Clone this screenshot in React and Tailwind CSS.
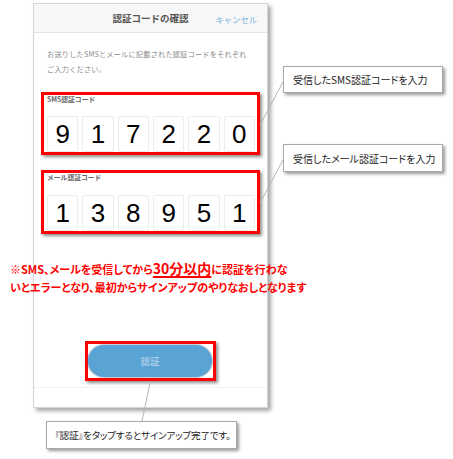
import React from "react";

const jp = "font-['Noto_Sans_CJK_JP','Noto_Sans',sans-serif]";

function DigitRow({ digits }) {
  return (
    <div className="flex gap-[4px] pl-[3px] pr-[2px]">
      {digits.map((d, i) => (
        <div
          key={i}
          className="flex-1 h-[36px] bg-white border border-[#ececec] rounded-[2px] flex items-center justify-center text-[26px] leading-none text-black font-['Liberation_Sans',sans-serif]"
        >
          {d}
        </div>
      ))}
    </div>
  );
}

function CodeBox({ label, digits, className }) {
  return (
    <div
      className={`border-[3px] border-[#ff0000] shadow-[2px_2px_3px_rgba(0,0,0,0.45)] ${className}`}
    >
      <div className="h-[8px] pl-[3px] text-[6.8px] leading-[8px] font-bold text-[#666]">{label}</div>
      {digits}
    </div>
  );
}

export default function App() {
  return (
    <div className={`relative w-[453px] h-[459px] bg-white overflow-hidden ${jp}`}>
      {/* phone screen */}
      <div className="ml-[33px] mt-[3px] w-[235px] h-[405px] border border-[#d6d6d6] bg-white shadow-[3px_3px_4px_rgba(0,0,0,0.35)] flex flex-col">
        <div className="relative h-[29px] shrink-0 bg-[#f7f7f7] border-b border-[#e4e4e4] flex items-center justify-center">
          <span className="text-[9.5px] font-bold text-[#555]">認証コードの確認</span>
          <span className="absolute right-[10px] top-[10px] text-[8.3px] leading-[10px] text-[#7ab5de]">キャンセル</span>
        </div>
        <div className="px-[7px] flex flex-col">
          <p className="mt-[14px] px-[6px] text-[7.2px] leading-[15px] text-[#8a8a8a] tracking-[0.2px]">
            お送りしたSMSとメールに記載された認証コードをそれぞれ
            <br />
            ご入力ください。
          </p>
          <CodeBox
            className="mt-[15px] h-[63px]"
            label="SMS認証コード"
            digits={
              <div className="mt-[13px]">
                <DigitRow digits={["9", "1", "7", "2", "2", "0"]} />
              </div>
            }
          />
          <CodeBox
            className="mt-[15px] h-[64px]"
            label="メール認証コード"
            digits={
              <div className="mt-[14px]">
                <DigitRow digits={["1", "3", "8", "9", "5", "1"]} />
              </div>
            }
          />
          <div className="mt-[107px] self-center w-[131px] h-[40px] border-[3px] border-[#ff0000] shadow-[2px_2px_3px_rgba(0,0,0,0.45)] p-[1px] pl-[0px]">
            <div className="h-full rounded-full bg-[#5aa3d5] shadow-[0_0_1px_1px_rgba(80,110,130,0.35)] flex items-center justify-center text-[9.5px] text-[#c6def0]">
              認証
            </div>
          </div>
        </div>
        <div className="mt-[6px] border-t border-[#f2f2f2] flex-1" />
      </div>

      {/* connector lines */}
      <svg className="absolute left-0 top-0 pointer-events-none" width="453" height="459">
        <line x1="283" y1="82" x2="260" y2="125" stroke="#b5b5b5" strokeWidth="1" />
        <line x1="283" y1="160" x2="260" y2="203" stroke="#b5b5b5" strokeWidth="1" />
        <line x1="150" y1="383" x2="142" y2="421" stroke="#b5b5b5" strokeWidth="1" />
      </svg>

      {/* callouts */}
      <div className="absolute left-[283px] top-[66px] w-[160px] h-[27px] bg-white border border-[#a9a9a9] shadow-[2px_2px_3px_rgba(0,0,0,0.4)] flex items-center pl-[9px] text-[10px] text-[#222] [font-feature-settings:'palt']">
        受信したSMS認証コードを入力
      </div>
      <div className="absolute left-[283px] top-[144px] w-[160px] h-[28px] bg-white border border-[#a9a9a9] shadow-[2px_2px_3px_rgba(0,0,0,0.4)] flex items-center pl-[9px] text-[10px] text-[#222] [font-feature-settings:'palt']">
        受信したメール認証コードを入力
      </div>
      <div className="absolute left-[46px] top-[421px] w-[191px] h-[28px] bg-white border border-[#a9a9a9] shadow-[2px_2px_3px_rgba(0,0,0,0.4)] flex items-center pl-[8px] text-[9.6px] text-[#222] tracking-[-0.2px] [font-feature-settings:'palt']">
        『認証』をタップするとサインアップ完了です。
      </div>

      {/* red note */}
      <div className="absolute left-[10px] top-[257px] text-[#ff0000] font-bold [font-feature-settings:'palt']">
        <div className="h-[20px] flex items-end text-[11px] leading-[16px] whitespace-nowrap">
          <span>※SMS、メールを受信してから</span>
          <span className="text-[14px] leading-[18px] underline decoration-[1.5px] underline-offset-[2px]">30分以内</span>
          <span>に認証を行わな</span>
        </div>
        <div className="h-[20px] flex items-center text-[11px] leading-[16px] whitespace-nowrap">
          いとエラーとなり、最初からサインアップのやりなおしとなります
        </div>
      </div>
    </div>
  );
}
